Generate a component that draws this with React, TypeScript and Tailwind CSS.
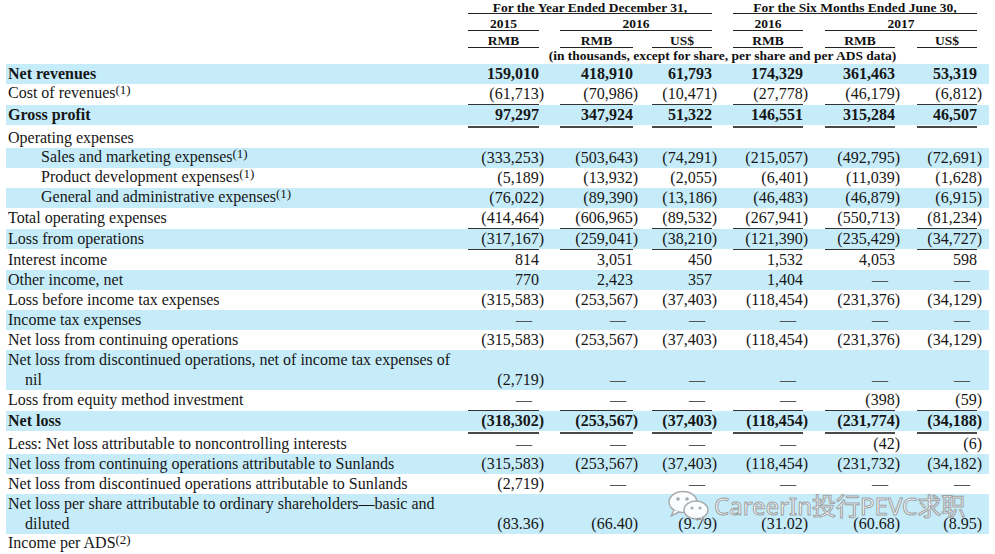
import React from 'react'

type Line = {
  label: string
  label2?: string
  sup?: string
  vals?: string[]
  bold?: boolean
  indent?: boolean
  ul?: 1 | 2
}

const D = '—'

const rows: Line[] = [
  { label: 'Net revenues', bold: true, vals: ['159,010', '418,910', '61,793', '174,329', '361,463', '53,319'] },
  { label: 'Cost of revenues', sup: '(1)', ul: 1, vals: ['(61,713)', '(70,986)', '(10,471)', '(27,778)', '(46,179)', '(6,812)'] },
  { label: 'Gross profit', bold: true, ul: 2, vals: ['97,297', '347,924', '51,322', '146,551', '315,284', '46,507'] },
  { label: 'Operating expenses' },
  { label: 'Sales and marketing expenses', sup: '(1)', indent: true, vals: ['(333,253)', '(503,643)', '(74,291)', '(215,057)', '(492,795)', '(72,691)'] },
  { label: 'Product development expenses', sup: '(1)', indent: true, vals: ['(5,189)', '(13,932)', '(2,055)', '(6,401)', '(11,039)', '(1,628)'] },
  { label: 'General and administrative expenses', sup: '(1)', indent: true, vals: ['(76,022)', '(89,390)', '(13,186)', '(46,483)', '(46,879)', '(6,915)'] },
  { label: 'Total operating expenses', ul: 1, vals: ['(414,464)', '(606,965)', '(89,532)', '(267,941)', '(550,713)', '(81,234)'] },
  { label: 'Loss from operations', ul: 1, vals: ['(317,167)', '(259,041)', '(38,210)', '(121,390)', '(235,429)', '(34,727)'] },
  { label: 'Interest income', vals: ['814', '3,051', '450', '1,532', '4,053', '598'] },
  { label: 'Other income, net', vals: ['770', '2,423', '357', '1,404', D, D] },
  { label: 'Loss before income tax expenses', vals: ['(315,583)', '(253,567)', '(37,403)', '(118,454)', '(231,376)', '(34,129)'] },
  { label: 'Income tax expenses', vals: [D, D, D, D, D, D] },
  { label: 'Net loss from continuing operations', vals: ['(315,583)', '(253,567)', '(37,403)', '(118,454)', '(231,376)', '(34,129)'] },
  { label: 'Net loss from discontinued operations, net of income tax expenses of', label2: 'nil', vals: ['(2,719)', D, D, D, D, D] },
  { label: 'Loss from equity method investment', ul: 1, vals: [D, D, D, D, '(398)', '(59)'] },
  { label: 'Net loss', bold: true, ul: 2, vals: ['(318,302)', '(253,567)', '(37,403)', '(118,454)', '(231,774)', '(34,188)'] },
  { label: 'Less: Net loss attributable to noncontrolling interests', vals: [D, D, D, D, '(42)', '(6)'] },
  { label: 'Net loss from continuing operations attributable to Sunlands', vals: ['(315,583)', '(253,567)', '(37,403)', '(118,454)', '(231,732)', '(34,182)'] },
  { label: 'Net loss from discontinued operations attributable to Sunlands', vals: ['(2,719)', D, D, D, D, D] },
  { label: 'Net loss per share attributable to ordinary shareholders—basic and', label2: 'diluted', vals: ['(83.36)', '(66.40)', '(9.79)', '(31.02)', '(60.68)', '(8.95)'] },
  { label: 'Income per ADS', sup: '(2)' },
]

const cols = [
  'w-[71px]',
  'ml-[21px] w-[73px]',
  'ml-[19px] w-[60px]',
  'ml-[21px] w-[70px]',
  'ml-[22px] w-[70px]',
  'ml-[22px] w-[60px]',
]

function Num({ v }: { v: string }) {
  if (v === D) return <span className="mr-[7px] text-[#555]">{v}</span>
  if (v.startsWith('(')) return <span className="-mr-[5px]">{v}</span>
  return <span>{v}</span>
}

function Row({ r, i }: { r: Line; i: number }) {
  const blue = i % 2 === 0
  return (
    <div>
      <div className={`flex items-end ${r.label2 ? 'h-[40px]' : 'h-[20px]'} ${blue ? 'bg-[#c6ecfa]' : ''} ${r.bold ? 'font-bold' : ''}`}>
        <div className={`w-[462px] shrink-0 pl-[2px] leading-[20px] ${r.indent ? 'pl-[35px]' : ''}`}>
          <div className="whitespace-nowrap">
            {r.label}
            {r.sup && <span className="relative -top-[4px] text-[13px]">{r.sup}</span>}
          </div>
          {r.label2 && <div className="pl-[17px]">{r.label2}</div>}
        </div>
        {r.vals &&
          r.vals.map((v, k) => (
            <div key={k} className={`${cols[k]} shrink-0 text-right leading-[20px] whitespace-nowrap`}>
              <Num v={v} />
            </div>
          ))}
      </div>
      {r.ul && (
        <div className={`flex pl-[462px] ${r.ul === 2 ? 'pt-[1px]' : ''}`}>
          {cols.map((c, k) => (
            <div key={k} className={`${c} shrink-0 ${r.ul === 2 ? 'h-[2px] bg-[#4a4a4a]' : 'h-[1px] bg-[#333]'}`} />
          ))}
        </div>
      )}
    </div>
  )
}

function WeChat() {
  return (
    <svg width="46" height="32" viewBox="0 0 46 32" fill="none">
      <ellipse cx="17" cy="12" rx="14" ry="10.5" fill="#fff" stroke="#a3a3a3" strokeWidth="1.4" />
      <path d="M8 20 L5 26 L13 22" fill="#fff" stroke="#a3a3a3" strokeWidth="1.4" strokeLinejoin="round" />
      <circle cx="12" cy="9" r="1.8" fill="#a3a3a3" />
      <circle cx="21" cy="9" r="1.8" fill="#a3a3a3" />
      <ellipse cx="30" cy="20" rx="12" ry="9" fill="#fff" stroke="#a3a3a3" strokeWidth="1.4" />
      <path d="M36 27 L39 31 L33 28.5" fill="#fff" stroke="#a3a3a3" strokeWidth="1.4" strokeLinejoin="round" />
      <circle cx="26" cy="18" r="1.5" fill="#a3a3a3" />
      <circle cx="34" cy="18" r="1.5" fill="#a3a3a3" />
    </svg>
  )
}

export default function App() {
  return (
    <div className="relative h-[554px] w-[995px] overflow-hidden bg-white text-[16px] text-[#161616] font-['Liberation_Serif','Times_New_Roman',serif]">
      <div className="ml-[6px] w-[983px]">
        {/* column headings */}
        <div className="text-[13.5px] font-bold leading-[11px] text-[#111]">
          <div className="flex pl-[462px]">
            <div className="h-[14px] w-[244px] border-b border-[#222] pt-[2px] text-center">For the Year Ended December 31,</div>
            <div className="ml-[21px] h-[14px] w-[244px] border-b border-[#222] pt-[2px] text-center">For the Six Months Ended June 30,</div>
          </div>
          <div className="flex pl-[462px]">
            <div className="h-[17px] w-[71px] border-b border-[#222] pt-[4px] text-center">2015</div>
            <div className="ml-[21px] h-[17px] w-[152px] border-b border-[#222] pt-[4px] text-center">2016</div>
            <div className="ml-[21px] h-[17px] w-[70px] border-b border-[#222] pt-[4px] text-center">2016</div>
            <div className="ml-[22px] h-[17px] w-[152px] border-b border-[#222] pt-[4px] text-center">2017</div>
          </div>
          <div className="flex pl-[462px]">
            {['RMB', 'RMB', 'US$', 'RMB', 'RMB', 'US$'].map((h, k) => (
              <div key={k} className={`${cols[k]} h-[17px] shrink-0 border-b border-[#222] pt-[4px] text-center`}>
                {h}
              </div>
            ))}
          </div>
          <div className="flex h-[16px] pl-[462px] pt-[2px]">
            <div className="w-[509px] text-center">(in thousands, except for share, per share and per ADS data)</div>
          </div>
        </div>

        {rows.map((r, i) => (
          <Row key={i} r={r} i={i} />
        ))}
      </div>

      <div className="absolute left-[666px] top-[490px] flex items-center gap-[2px] opacity-90">
        <WeChat />
        <span className="text-[24px] leading-none text-white font-['Noto_Sans','Noto_Sans_CJK_SC',sans-serif] [-webkit-text-stroke:1px_#9a9a9a]">
          CareerIn投行PEVC求职
        </span>
      </div>
    </div>
  )
}
